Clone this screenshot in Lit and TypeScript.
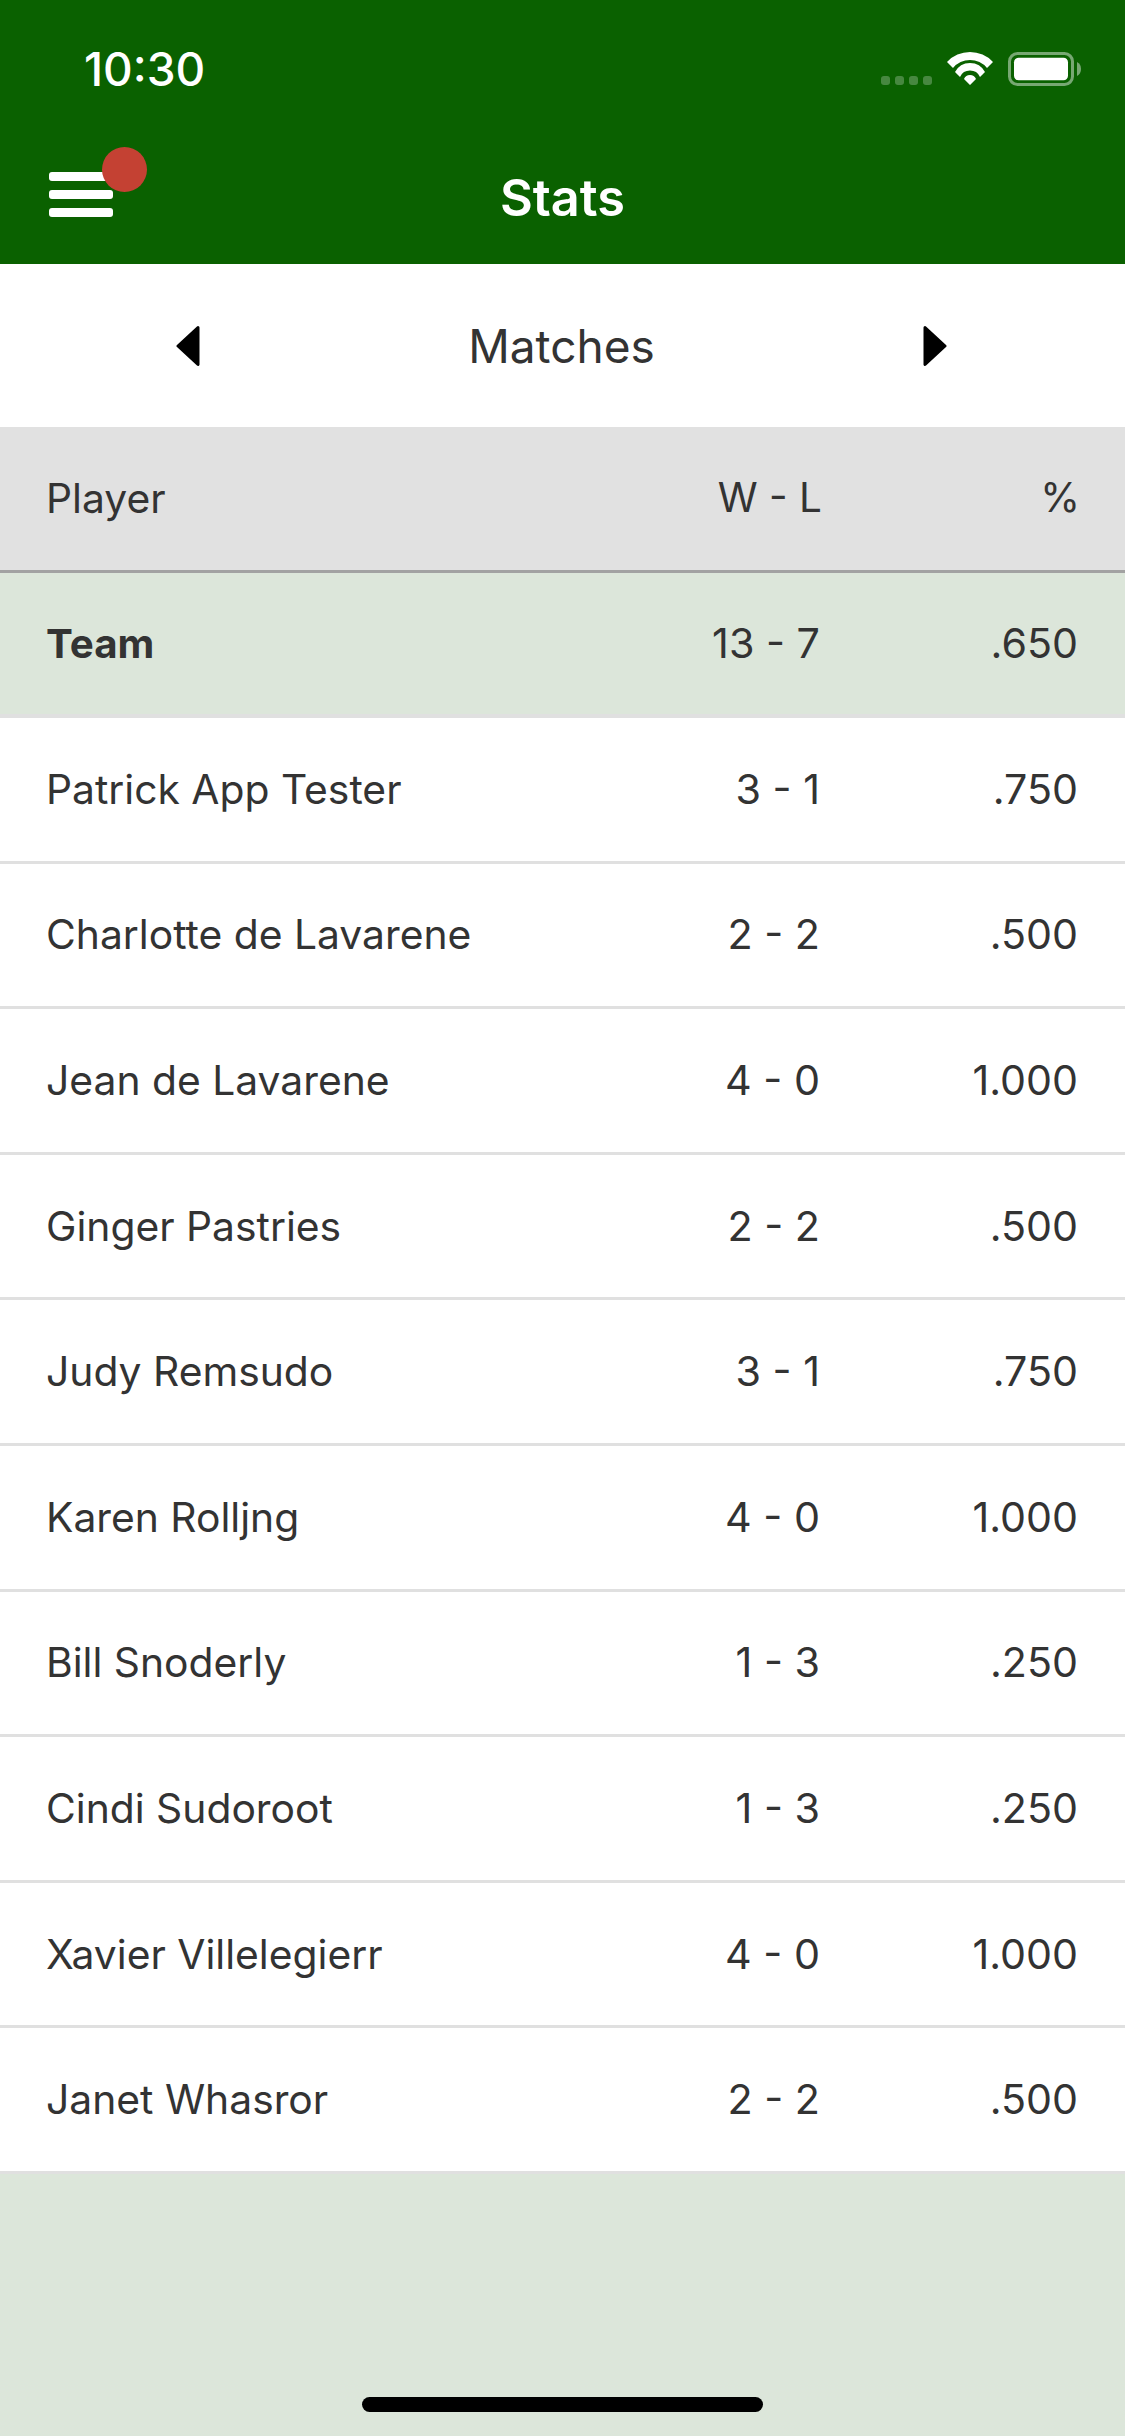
import { LitElement, html, css, svg } from "lit";
import { customElement } from "lit/decorators.js";

const rows: [string, string, string][] = [
  ["Patrick App Tester", "3 - 1", ".750"],
  ["Charlotte de Lavarene", "2 - 2", ".500"],
  ["Jean de Lavarene", "4 - 0", "1.000"],
  ["Ginger Pastries", "2 - 2", ".500"],
  ["Judy Remsudo", "3 - 1", ".750"],
  ["Karen Rolljng", "4 - 0", "1.000"],
  ["Bill Snoderly", "1 - 3", ".250"],
  ["Cindi Sudoroot", "1 - 3", ".250"],
  ["Xavier Villelegierr", "4 - 0", "1.000"],
  ["Janet Whasror", "2 - 2", ".500"],
];

@customElement("app-root")
export class AppRoot extends LitElement {
  static styles = css`
    :host { display: block; width: 1125px; height: 2436px; font-family: Inter, "Liberation Sans", sans-serif; color: #333; background: #dce6da; position: relative; overflow: hidden; }
    .top { background: #0a6100; height: 264px; color: #fff; display: flex; flex-direction: column; }
    .status { height: 132px; display: flex; align-items: center; justify-content: space-between; padding: 0 41px 0 84px; box-sizing: border-box; }
    .time { font-size: 46px; font-weight: 500; margin-top: 6px; }
    .sicons { display: block; margin-top: 12px; }
    .bar { height: 132px; position: relative; display: flex; align-items: center; justify-content: center; }
    .title { font-size: 50.500px; font-weight: 600; margin-top: -2px; }
    .burger { position: absolute; left: 49px; top: 40px; width: 64px; display: flex; flex-direction: column; gap: 9px; }
    .burger i { display: block; height: 9px; background: #fff; border-radius: 3px; }
    .dot { position: absolute; left: 102px; top: 15px; width: 45px; height: 45px; border-radius: 50%; background: #c44133; }
    .nav { height: 163px; background: #fff; display: flex; align-items: center; justify-content: space-between; padding: 0 178px 0 176px; }
    .nav span { font-size: 46px; font-weight: 390; }
    .row { display: flex; align-items: center; box-sizing: border-box; padding: 0 47px 1px 46px; height: 145.6px; background: #fff; border-bottom: 3px solid #e0e0e0; font-size: 40.800px; font-weight: 385; }
    .row .n { flex: 1; }
    .row .wl { width: 200px; text-align: right; font-size: 41.300px; }
    .row .p { width: 258px; text-align: right; font-size: 41.200px; }
    .head { background: #e1e1e1; height: 146px; border-bottom: 3px solid #a2a2a2; padding: 0 45px 2px 46px; }
    .head .wl { font-size: 40.500px; }
    .head .p { font-size: 40.500px; }
    .team { background: #dce6da; height: 145px; border-bottom: 4px solid #e0e0e0; }
    .team .n { font-weight: 700; font-size: 40.300px; }
    .home { position: absolute; left: 362px; top: 2397px; width: 401px; height: 15px; border-radius: 8px; background: #000; }
  `;

  render() {
    return html`
      <div class="top">
        <div class="status">
          <span class="time">10:30</span>
          <svg class="sicons" width="203" height="40" viewBox="0 0 203 40">
            ${[0, 14, 28, 42].map((x) => svg`<rect x=${x} y="24" width="9" height="9" rx="3" fill="#fff" opacity=".25"/>`)}
            <path d="M66 10 A31.500 31.500 0 0 1 112 10 L106 16 A22 22 0 0 0 72 16Z M74 20 A17 17 0 0 1 104 20 L99 25 A11 11 0 0 0 79 25Z M83 27 A6.500 6.500 0 0 1 95 27 L89 33Z" fill="#fff"/>
            <rect x="128.500" y="1.500" width="63" height="31" rx="8" fill="none" stroke="#fff" stroke-opacity=".45" stroke-width="3"/>
            <rect x="133" y="5.700" width="54" height="22.500" rx="4.500" fill="#fff"/>
            <path d="M196 10 q4 2 4 7 t-4 7z" fill="#fff" opacity=".45"/>
          </svg>
        </div>
        <div class="bar">
          <div class="burger"><i></i><i></i><i></i></div>
          <div class="dot"></div>
          <span class="title">Stats</span>
        </div>
      </div>
      <div class="nav">
        <svg width="24" height="42" viewBox="0 0 24 42"><path d="M22 2.500 L2 21 L22 39.500Z" fill="#000" stroke="#000" stroke-width="3" stroke-linejoin="round"/></svg>
        <span>Matches</span>
        <svg width="24" height="42" viewBox="0 0 24 42"><path d="M2 2.500 L22 21 L2 39.500Z" fill="#000" stroke="#000" stroke-width="3" stroke-linejoin="round"/></svg>
      </div>
      <div class="row head"><span class="n">Player</span><span class="wl">W - L</span><span class="p">%</span></div>
      <div class="row team"><span class="n">Team</span><span class="wl">13 - 7</span><span class="p">.650</span></div>
      ${rows.map((r) => html`<div class="row"><span class="n">${r[0]}</span><span class="wl">${r[1]}</span><span class="p">${r[2]}</span></div>`)}
      <div class="home"></div>
    `;
  }
}
